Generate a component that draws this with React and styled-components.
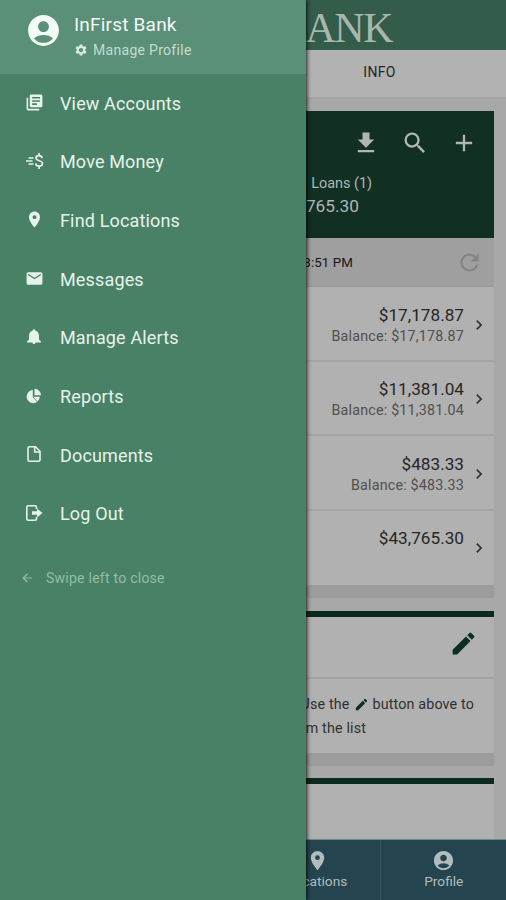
import React from "react";
import styled, { createGlobalStyle } from "styled-components";
import {
  MdAccountCircle,
  MdAdd,
  MdArrowBack,
  MdChevronRight,
  MdEdit,
  MdEmail,
  MdGetApp,
  MdLibraryBooks,
  MdLocationOn,
  MdRefresh,
  MdSearch,
  MdSettings,
} from "react-icons/md";

const GlobalStyle = createGlobalStyle`
  * {
    box-sizing: border-box;
  }

  body {
    margin: 0;
    overflow: hidden;
    background: #a8a8a8;
    font-family: Roboto, "Liberation Sans", sans-serif;
  }

  svg {
    display: block;
    flex-shrink: 0;
  }
`;

const Screen = styled.div`
  position: relative;
  display: flex;
  flex-direction: column;
  width: 506px;
  height: 900px;
  overflow: hidden;
`;

/* page behind the drawer */

const Header = styled.header`
  display: flex;
  justify-content: flex-end;
  height: 50px;
  padding: 4px 114px 0 0;
  background: #345c4a;
`;

const Logo = styled.div`
  font-family: "Liberation Serif", serif;
  font-size: 42px;
  line-height: 49px;
  letter-spacing: -1.5px;
  color: #a9b6ae;
`;

const Tabs = styled.nav`
  display: grid;
  grid-template-columns: 1fr 1fr;
  height: 49px;
  background: #b2b2b2;
  border-bottom: 2px solid #a3a3a3;
`;

const Tab = styled.div`
  grid-column: 2;
  display: flex;
  align-items: center;
  justify-content: center;
  padding-bottom: 4px;
  font-size: 14px;
  letter-spacing: 0.3px;
  color: #262626;
`;

const Content = styled.main`
  flex: 1;
  min-height: 0;
  padding: 12px 12px 0;
  overflow: hidden;
`;

const Summary = styled.section`
  height: 127px;
  padding: 18px 16px 0;
  background: #112f23;
  color: #b0b7b3;
`;

const Actions = styled.div`
  display: flex;
  justify-content: flex-end;
  gap: 21px;
  height: 43px;
`;

const SummaryLine = styled.div`
  width: ${(props) => props.$width}px;
  margin-left: auto;
  margin-right: ${(props) => props.$right}px;
  text-align: right;
  white-space: nowrap;
  font-size: ${(props) => props.$size}px;
  line-height: 23px;
`;

const Updated = styled.div`
  display: flex;
  align-items: center;
  justify-content: flex-end;
  height: 49px;
  padding: 1px 11px 0 0;
  background: #9f9f9f;
  border-bottom: 1px solid #989898;
  font-size: 13.3px;
  letter-spacing: 0.1px;
  color: #171717;

  svg {
    margin-left: 103px;
    color: #858585;
  }
`;

const Account = styled.div`
  display: flex;
  align-items: center;
  justify-content: flex-end;
  height: 74.5px;
  padding: 3px 5px 0 0;
  background: #b1b1b1;
  border-bottom: 2px solid ${(props) => (props.$last ? "#b1b1b1" : "#a5a5a5")};
  color: #333;
`;

const Amounts = styled.div`
  height: 42px;
  margin-right: 5px;
  text-align: right;
`;

const Amount = styled.div`
  font-size: 17.2px;
  line-height: 22px;
  color: #262626;
`;

const Balance = styled.div`
  font-size: 14.3px;
  line-height: 20px;
  letter-spacing: 0.2px;
  color: #505050;
`;

const Strip = styled.div`
  height: 13px;
  margin-bottom: ${(props) => props.$gap}px;
  background: #9c9c9c;
`;

const Card = styled.section`
  height: ${(props) => props.$height}px;
  border-top: 6px solid #0a2a1d;
  background: #b1b1b1;
`;

const CardHead = styled.div`
  display: flex;
  align-items: center;
  justify-content: flex-end;
  height: 62px;
  padding-right: 16px;
  padding-bottom: 7px;
  border-bottom: 2px solid #a3a3a3;
  color: #0d2f23;
`;

const Hint = styled.p`
  display: flex;
  flex-direction: column;
  margin: 0;
  padding: 13px 20px 0 0;
  font-size: 14.3px;
  line-height: 24px;
  letter-spacing: 0.15px;
  color: #303030;
`;

const HintLine = styled.span`
  display: flex;
  align-items: center;
  justify-content: flex-end;
  gap: 4px;
  margin-right: ${(props) => props.$right || 0}px;
  white-space: nowrap;
`;

const BottomNav = styled.nav`
  display: grid;
  grid-template-columns: repeat(4, 1fr);
  height: 61px;
  background: #24454f;
  border-top: 1px solid #71868a;
`;

const NavItem = styled.div`
  grid-column: ${(props) => props.$column};
  display: flex;
  flex-direction: column;
  align-items: center;
  padding: 9px 0 0 1px;
  border-left: 1px solid #345660;
  font-size: 13.7px;
  line-height: 19px;
  color: #b2bbbe;
`;

/* drawer */

const Drawer = styled.aside`
  position: absolute;
  top: 0;
  left: 0;
  width: 306px;
  height: 900px;
  background: #498166;
  box-shadow: 1px 0 4px rgba(0, 0, 0, 0.85);
`;

const ProfileBox = styled.div`
  display: flex;
  height: 74px;
  padding: 12px 0 0 25px;
  background: #5a8f78;
  color: #f4faf6;
`;

const ProfileText = styled.div`
  margin-left: 12px;
`;

const BankName = styled.div`
  font-size: 19px;
  line-height: 25px;
  letter-spacing: 0.2px;
`;

const ManageProfile = styled.div`
  display: flex;
  align-items: center;
  gap: 5px;
  height: 25px;
  font-size: 14px;
  letter-spacing: 0.3px;
  color: #c5dccf;

  svg {
    color: #d9e9e0;
  }
`;

const Menu = styled.ul`
  margin: 0;
  padding: 0;
  list-style: none;
`;

const MenuItem = styled.li`
  display: flex;
  align-items: center;
  height: 58.7px;
  padding-bottom: 0.5px;
  font-size: 18px;
  letter-spacing: 0.15px;
  color: #e6f3eb;
`;

const IconBox = styled.span`
  display: flex;
  justify-content: center;
  width: 20px;
  margin: 0 16px 2px 24px;
`;

const SwipeHint = styled.div`
  display: flex;
  align-items: center;
  gap: 12px;
  height: 24px;
  margin: 22px 0 0 20px;
  font-size: 14px;
  letter-spacing: 0.25px;
  color: #93bda5;
`;

function MoneyIcon() {
  return (
    <svg width="19" height="18" viewBox="0 0 19 18" fill="none" stroke="currentColor" strokeWidth="1.6">
      <path d="M3.500 6h5M1 9h6.500M3.500 12h5" />
      <path d="M17.200 6.200C16.900 4.500 15.700 3.600 14 3.600c-1.900 0-3 1-3 2.500 0 3.500 6.500 1.900 6.500 5.400 0 1.600-1.300 2.600-3.400 2.600-2 0-3.300-1-3.500-2.800M14.100 1v2.800M14.100 14v3" />
    </svg>
  );
}

function BellIcon() {
  return (
    <svg width="18" height="18" viewBox="0 0 18 18" fill="currentColor">
      <path d="M7.800 2.500a1.200 1.200 0 0 1 2.400 0C12.700 3.200 14 5.200 14 7.800v3.700l2 2.100v1H2v-1l2-2.100V7.800c0-2.600 1.300-4.600 3.800-5.300zM7.500 14.600h3a1.500 1.500 0 0 1-3 0z" />
    </svg>
  );
}

function PieIcon() {
  return (
    <svg width="16" height="16" viewBox="0 0 16 16" fill="currentColor">
      <path d="M6.800 2v6.800h7A6.600 6.600 0 1 1 6.800 2z" />
      <path d="M8.500.7A6.600 6.600 0 0 1 15 7.200H8.500z" />
      <path d="M6.800 8.800l4.500 5" stroke="#498166" strokeWidth="0.800" />
    </svg>
  );
}

function DocumentIcon() {
  return (
    <svg width="18" height="18" viewBox="0 0 18 18" fill="none" stroke="currentColor" strokeWidth="1.600">
      <path d="M3 3.200Q3 1.800 4.400 1.800H10.500L15 6.300V14.800Q15 16.200 13.600 16.200H4.400Q3 16.200 3 14.800z" />
      <path d="M9.700 2v5H15" />
    </svg>
  );
}

function LogOutIcon() {
  return (
    <svg width="18" height="18" viewBox="0 0 18 18">
      <path
        d="M11.500 5V3.200Q11.500 1.800 10.100 1.800H3.200Q1.800 1.800 1.800 3.200V14.800Q1.800 16.200 3.200 16.200H10.100Q11.500 16.200 11.500 14.800V13"
        fill="none"
        stroke="currentColor"
        strokeWidth="1.600"
      />
      <path d="M7 7.200h5V4.400L17.500 9 12 13.600v-2.800H7z" fill="currentColor" />
    </svg>
  );
}

const menu = [
  { label: "View Accounts", icon: <MdLibraryBooks size={19} /> },
  { label: "Move Money", icon: <MoneyIcon /> },
  { label: "Find Locations", icon: <MdLocationOn size={19} /> },
  { label: "Messages", icon: <MdEmail size={19} /> },
  { label: "Manage Alerts", icon: <BellIcon /> },
  { label: "Reports", icon: <PieIcon /> },
  { label: "Documents", icon: <DocumentIcon /> },
  { label: "Log Out", icon: <LogOutIcon /> },
];

const accounts = [
  { amount: "$17,178.87", balance: "Balance: $17,178.87" },
  { amount: "$11,381.04", balance: "Balance: $11,381.04" },
  { amount: "$483.33", balance: "Balance: $483.33" },
  { amount: "$43,765.30" },
];

export default function App() {
  return (
    <Screen>
      <GlobalStyle />
      <Header>
        <Logo>ANK</Logo>
      </Header>
      <Tabs>
        <Tab>INFO</Tab>
      </Tabs>
      <Content>
        <Summary>
          <Actions>
            <MdGetApp size={28} />
            <MdSearch size={28} />
            <MdAdd size={28} />
          </Actions>
          <SummaryLine $width={70} $right={106} $size={14.4}>
            Loans (1)
          </SummaryLine>
          <SummaryLine $width={90} $right={119} $size={17.3}>
            765.30
          </SummaryLine>
        </Summary>
        <Updated>
          8:51 PM
          <MdRefresh size={27} />
        </Updated>
        {accounts.map((account, i) => (
          <Account key={account.amount} $last={i === accounts.length - 1}>
            <Amounts>
              <Amount>{account.amount}</Amount>
              {account.balance && <Balance>{account.balance}</Balance>}
            </Amounts>
            <MdChevronRight size={20} />
          </Account>
        ))}
        <Strip $gap={13} />
        <Card $height={142}>
          <CardHead>
            <MdEdit size={29} />
          </CardHead>
          <Hint>
            <HintLine>
              Use the <MdEdit size={15} color="#0d2f23" /> button above to
            </HintLine>
            <HintLine $right={108}>m the list</HintLine>
          </Hint>
        </Card>
        <Strip $gap={12} />
        <Card $height={80} />
      </Content>
      <BottomNav>
        <NavItem $column={3}>
          <MdLocationOn size={23} />
          Locations
        </NavItem>
        <NavItem $column={4}>
          <MdAccountCircle size={23} />
          Profile
        </NavItem>
      </BottomNav>

      <Drawer>
        <ProfileBox>
          <MdAccountCircle size={37} />
          <ProfileText>
            <BankName>InFirst Bank</BankName>
            <ManageProfile>
              <MdSettings size={14} />
              Manage Profile
            </ManageProfile>
          </ProfileText>
        </ProfileBox>
        <Menu>
          {menu.map((item) => (
            <MenuItem key={item.label}>
              <IconBox>{item.icon}</IconBox>
              {item.label}
            </MenuItem>
          ))}
        </Menu>
        <SwipeHint>
          <MdArrowBack size={14} />
          Swipe left to close
        </SwipeHint>
      </Drawer>
    </Screen>
  );
}
